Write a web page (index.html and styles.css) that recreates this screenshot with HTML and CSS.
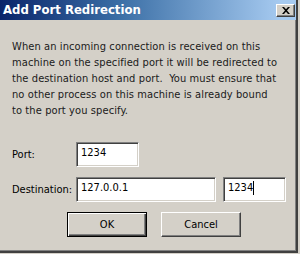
FILE: index.html
```html
<!DOCTYPE html>
<html>
<head>
<meta charset="utf-8">
<link rel="stylesheet" href="styles.css">
</head>
<body>
<div class="window">
  <div class="titlebar">
    <span class="title">Add Port Redirection</span>
    <span class="close"><svg width="8" height="7" viewBox="0 0 8 7"><path d="M0 0h2l2 2.2L6 0h2L5 3.5 8 7H6L4 4.8 2 7H0l3-3.5z" fill="#000"/></svg></span>
  </div>
  <div class="content">
    <p class="msg">When an incoming connection is received on this<br>machine on the specified port it will be redirected to<br>the destination host and port.&nbsp; You must ensure that<br>no other process on this machine is already bound<br>to the port you specify.</p>
    <div class="row port-row">
      <span class="label">Port:</span>
      <div class="field port">1234</div>
    </div>
    <div class="row dest-row">
      <span class="label">Destination:</span>
      <div class="field host">127.0.0.1</div>
      <div class="field dport">1234<span class="caret"></span></div>
    </div>
    <div class="buttons">
      <div class="btn default"><span>OK</span></div>
      <div class="btn"><span>Cancel</span></div>
    </div>
  </div>
</div>
</body>
</html>
```
FILE: styles.css
```css
html, body {
  margin: 0;
  padding: 0;
  background: #d4d0c8;
}
body {
  width: 300px;
  height: 254px;
  overflow: hidden;
  font-family: "DejaVu Sans Condensed", "DejaVu Sans", sans-serif;
  font-size: 11px;
  color: #000;
}
.window {
  box-sizing: border-box;
  width: 298px;
  height: 253px;
  background: #d4d0c8;
  border-right: 2px solid #404040;
  border-bottom: 2px solid #404040;
  box-shadow: inset -1px -1px 0 #808080;
  display: flex;
  flex-direction: column;
}
.titlebar {
  height: 20px;
  flex: none;
  background: linear-gradient(to right, #0a246a 0%, #3a6ea5 40%, #a6caf0 95%);
  display: flex;
  align-items: center;
  justify-content: space-between;
  padding: 0 0 0 3px;
}
.title {
  color: #fff;
  font-weight: bold;
  font-size: 13px;
  line-height: 20px;
}
.close {
  width: 17px;
  height: 11px;
  margin-right: 1px;
  background: #d4d0c8;
  border-top: 1px solid #fff;
  border-left: 1px solid #fff;
  border-right: 1px solid #404040;
  border-bottom: 1px solid #404040;
  box-shadow: inset -1px -1px 0 #808080;
  display: flex;
  align-items: center;
  justify-content: center;
}
.content {
  padding: 19px 0 0 12px;
  display: flex;
  flex-direction: column;
}
.msg {
  margin: 0;
  line-height: 16px;
  letter-spacing: 0.1px;
  color: #1a1a1a;
}
.row {
  display: flex;
  align-items: center;
}
.port-row {
  margin-top: 23px;
}
.dest-row {
  margin-top: 10px;
}
.label {
  width: 64px;
  flex: none;
}
.field {
  box-sizing: border-box;
  height: 25px;
  background: #fff;
  border-top: 1px solid #808080;
  border-left: 1px solid #808080;
  border-right: 1px solid #fff;
  border-bottom: 1px solid #fff;
  box-shadow: inset 1px 1px 0 #404040, inset -1px -1px 0 #d4d0c8;
  padding: 3px 0 0 4px;
  line-height: 14px;
}
.port { width: 63px; }
.host { width: 140px; }
.dport { width: 63px; margin-left: 7px; }
.caret {
  display: inline-block;
  width: 1px;
  height: 14px;
  background: #000;
  vertical-align: top;
}
.buttons {
  display: flex;
  gap: 14px;
  margin-top: 10px;
  margin-left: 55px;
}
.btn {
  box-sizing: border-box;
  width: 80px;
  height: 25px;
  background: #d4d0c8;
  border-top: 1px solid #fff;
  border-left: 1px solid #fff;
  border-right: 1px solid #404040;
  border-bottom: 1px solid #404040;
  box-shadow: inset -1px -1px 0 #808080;
  display: flex;
  align-items: center;
  justify-content: center;
}
.btn.default {
  border: 1px solid #000;
  box-shadow: inset 1px 1px 0 #fff, inset -1px -1px 0 #404040, inset -2px -2px 0 #808080;
}
```
